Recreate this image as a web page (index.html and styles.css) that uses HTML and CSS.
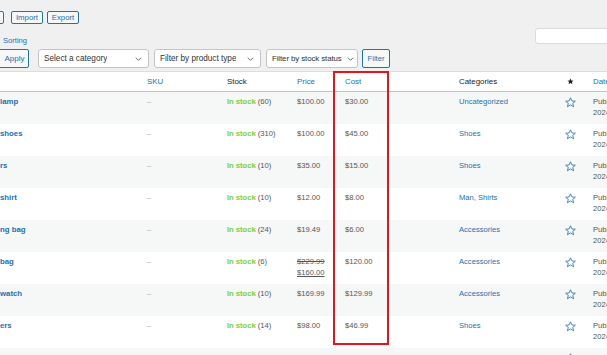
FILE: index.html
```html
<!DOCTYPE html>
<html>
<head>
<meta charset="utf-8">
<link rel="stylesheet" href="styles.css">
</head>
<body>
<div class="page">
  <div class="top-actions">
    <a class="btn btn-cut">Add new</a>
    <a class="btn">Import</a>
    <a class="btn">Export</a>
  </div>
  <div class="subbar">
    <a class="sub-link">Sorting</a>
    <div class="search"></div>
  </div>
  <div class="filters">
    <a class="btn btn-apply">Apply</a>
    <div class="select w-cat"><span>Select a category</span><svg class="chev" viewBox="0 0 10 6"><path d="M1 1l4 4 4-4" fill="none" stroke="#50575e" stroke-width="1.3"/></svg></div>
    <div class="select w-type"><span>Filter by product type</span><svg class="chev" viewBox="0 0 10 6"><path d="M1 1l4 4 4-4" fill="none" stroke="#50575e" stroke-width="1.3"/></svg></div>
    <div class="select w-stock"><span>Filter by stock status</span><svg class="chev" viewBox="0 0 10 6"><path d="M1 1l4 4 4-4" fill="none" stroke="#50575e" stroke-width="1.3"/></svg></div>
    <a class="btn btn-filter">Filter</a>
  </div>

  <div class="table">
    <div class="row head">
      <div></div>
      <div class="sort">SKU</div>
      <div>Stock</div>
      <div class="sort">Price</div>
      <div class="sort">Cost</div>
      <div>Categories</div>
      <div class="star-h"><svg viewBox="0 0 20 20"><polygon points="10,1.5 12.6,7.2 18.8,7.6 14,11.6 15.6,17.7 10,14.4 4.4,17.7 6,11.6 1.2,7.6 7.4,7.2" fill="#1d2327"/></svg></div>
      <div class="sort">Date</div>
    </div>

    <div class="row alt">
      <div class="name">lamp</div><div class="dash">–</div>
      <div><b class="instock">In stock</b> (60)</div>
      <div>$100.00</div><div>$30.00</div>
      <div class="cat">Uncategorized</div>
      <div class="star"><svg viewBox="0 0 20 20"><polygon points="10,1.5 12.6,7.2 18.8,7.6 14,11.6 15.6,17.7 10,14.4 4.4,17.7 6,11.6 1.2,7.6 7.4,7.2" fill="none" stroke="#2271b1" stroke-width="1.5" stroke-linejoin="round"/></svg></div>
      <div class="date">Published<br>2024/01/15 at 10:00 am</div>
    </div>

    <div class="row">
      <div class="name">shoes</div><div class="dash">–</div>
      <div><b class="instock">In stock</b> (310)</div>
      <div>$100.00</div><div>$45.00</div>
      <div class="cat">Shoes</div>
      <div class="star"><svg viewBox="0 0 20 20"><polygon points="10,1.5 12.6,7.2 18.8,7.6 14,11.6 15.6,17.7 10,14.4 4.4,17.7 6,11.6 1.2,7.6 7.4,7.2" fill="none" stroke="#2271b1" stroke-width="1.5" stroke-linejoin="round"/></svg></div>
      <div class="date">Published<br>2024/01/15 at 10:00 am</div>
    </div>

    <div class="row alt">
      <div class="name">rs</div><div class="dash">–</div>
      <div><b class="instock">In stock</b> (10)</div>
      <div>$35.00</div><div>$15.00</div>
      <div class="cat">Shoes</div>
      <div class="star"><svg viewBox="0 0 20 20"><polygon points="10,1.5 12.6,7.2 18.8,7.6 14,11.6 15.6,17.7 10,14.4 4.4,17.7 6,11.6 1.2,7.6 7.4,7.2" fill="none" stroke="#2271b1" stroke-width="1.5" stroke-linejoin="round"/></svg></div>
      <div class="date">Published<br>2024/01/15 at 10:00 am</div>
    </div>

    <div class="row">
      <div class="name">shirt</div><div class="dash">–</div>
      <div><b class="instock">In stock</b> (10)</div>
      <div>$12.00</div><div>$8.00</div>
      <div class="cat">Man, Shirts</div>
      <div class="star"><svg viewBox="0 0 20 20"><polygon points="10,1.5 12.6,7.2 18.8,7.6 14,11.6 15.6,17.7 10,14.4 4.4,17.7 6,11.6 1.2,7.6 7.4,7.2" fill="none" stroke="#2271b1" stroke-width="1.5" stroke-linejoin="round"/></svg></div>
      <div class="date">Published<br>2024/01/15 at 10:00 am</div>
    </div>

    <div class="row alt">
      <div class="name">ng bag</div><div class="dash">–</div>
      <div><b class="instock">In stock</b> (24)</div>
      <div>$19.49</div><div>$6.00</div>
      <div class="cat">Accessories</div>
      <div class="star"><svg viewBox="0 0 20 20"><polygon points="10,1.5 12.6,7.2 18.8,7.6 14,11.6 15.6,17.7 10,14.4 4.4,17.7 6,11.6 1.2,7.6 7.4,7.2" fill="none" stroke="#2271b1" stroke-width="1.5" stroke-linejoin="round"/></svg></div>
      <div class="date">Published<br>2024/01/15 at 10:00 am</div>
    </div>

    <div class="row">
      <div class="name">bag</div><div class="dash">–</div>
      <div><b class="instock">In stock</b> (6)</div>
      <div><del>$229.99</del><br><ins>$160.00</ins></div><div>$120.00</div>
      <div class="cat">Accessories</div>
      <div class="star"><svg viewBox="0 0 20 20"><polygon points="10,1.5 12.6,7.2 18.8,7.6 14,11.6 15.6,17.7 10,14.4 4.4,17.7 6,11.6 1.2,7.6 7.4,7.2" fill="none" stroke="#2271b1" stroke-width="1.5" stroke-linejoin="round"/></svg></div>
      <div class="date">Published<br>2024/01/15 at 10:00 am</div>
    </div>

    <div class="row alt">
      <div class="name">watch</div><div class="dash">–</div>
      <div><b class="instock">In stock</b> (10)</div>
      <div>$169.99</div><div>$129.99</div>
      <div class="cat">Accessories</div>
      <div class="star"><svg viewBox="0 0 20 20"><polygon points="10,1.5 12.6,7.2 18.8,7.6 14,11.6 15.6,17.7 10,14.4 4.4,17.7 6,11.6 1.2,7.6 7.4,7.2" fill="none" stroke="#2271b1" stroke-width="1.5" stroke-linejoin="round"/></svg></div>
      <div class="date">Published<br>2024/01/15 at 10:00 am</div>
    </div>

    <div class="row">
      <div class="name">ers</div><div class="dash">–</div>
      <div><b class="instock">In stock</b> (14)</div>
      <div>$98.00</div><div>$46.99</div>
      <div class="cat">Shoes</div>
      <div class="star"><svg viewBox="0 0 20 20"><polygon points="10,1.5 12.6,7.2 18.8,7.6 14,11.6 15.6,17.7 10,14.4 4.4,17.7 6,11.6 1.2,7.6 7.4,7.2" fill="none" stroke="#2271b1" stroke-width="1.5" stroke-linejoin="round"/></svg></div>
      <div class="date">Published<br>2024/01/15 at 10:00 am</div>
    </div>

    <div class="row alt">
      <div></div><div></div><div></div><div></div><div></div><div></div>
      <div class="star"><svg viewBox="0 0 20 20"><polygon points="10,1.5 12.6,7.2 18.8,7.6 14,11.6 15.6,17.7 10,14.4 4.4,17.7 6,11.6 1.2,7.6 7.4,7.2" fill="none" stroke="#2271b1" stroke-width="1.5" stroke-linejoin="round"/></svg></div>
      <div></div>
    </div>
  </div>

  <div class="highlight"></div>
</div>
</body>
</html>
```

FILE: styles.css
```css
html, body {
  margin: 0;
  padding: 0;
  overflow: hidden;
  background: #f0f0f1;
}
body {
  width: 607px;
  height: 355px;
  font-family: "Liberation Sans", Arial, sans-serif;
  color: #50575e;
}
.page {
  position: relative;
  width: 607px;
  height: 355px;
}
.top-actions {
  display: flex;
  gap: 4px;
  padding-top: 11px;
  height: 13px;
}
.btn {
  display: flex;
  align-items: center;
  justify-content: center;
  box-sizing: border-box;
  border: 1px solid #2271b1;
  border-radius: 2px;
  background: #f6f7f7;
  color: #2271b1;
  font-size: 7.8px;
  white-space: nowrap;
  overflow: hidden;
}
.top-actions .btn {
  height: 13px;
  width: 32px;
}
.top-actions .btn-cut {
  margin-left: -28px;
  color: transparent;
}
.top-actions .btn + .btn:nth-child(2) {
  margin-left: 3px;
}
.subbar {
  display: flex;
  justify-content: space-between;
  align-items: flex-start;
  margin-top: 4px;
  height: 17px;
}
.sub-link {
  color: #2271b1;
  font-size: 7.6px;
  line-height: 11px;
  margin-left: 3px;
  margin-top: 7px;
}
.search {
  width: 80px;
  height: 16px;
  box-sizing: border-box;
  border: 1px solid #dcdcde;
  border-radius: 3px;
  background: #fff;
  margin-right: -8px;
}
.filters {
  display: flex;
  gap: 5px;
  margin-top: 4px;
  height: 19px;
}
.filters .btn {
  height: 19px;
}
.btn-apply {
  width: 39px;
  margin-left: -10px;
  margin-right: 4px;
  padding-left: 10px;
  font-size: 8px;
}
.btn-filter {
  width: 28px;
  margin-left: -1px;
  font-size: 7.6px;
}
.select {
  display: flex;
  align-items: center;
  justify-content: space-between;
  box-sizing: border-box;
  height: 19px;
  background: #fff;
  border: 1px solid #c3c4c7;
  border-radius: 3px;
  padding: 0 6px 0 5px;
  font-size: 8.2px;
  color: #2c3338;
  white-space: nowrap;
}
.select span {
  overflow: hidden;
}
.w-cat { width: 111px; }
.w-type { width: 107px; }
.w-stock {
  width: 92px;
  padding-right: 3px;
  font-size: 7.9px;
  letter-spacing: -0.1px;
}
.chev {
  width: 7px;
  height: 4px;
  flex: none;
}
.table {
  margin-top: 3px;
  border-top: 1px solid #dcdcde;
  background: #fff;
}
.row {
  display: grid;
  grid-template-columns: 147px 80px 70px 48px 114px 104px 30px 1fr;
  height: 32px;
  box-sizing: border-box;
  padding-top: 4px;
  font-size: 7.6px;
  line-height: 11px;
  background: #fff;
  white-space: nowrap;
}
.row.alt {
  background: #f6f7f7;
}
.row.head {
  height: 20px;
  padding-top: 4px;
  border-bottom: 1px solid #c3c4c7;
  color: #1d2327;
  font-size: 7.9px;
  font-weight: normal;
}
.sort {
  color: #2271b1;
}
.name {
  color: #2271b1;
  font-weight: bold;
  font-size: 7.8px;
}
.dash {
  color: #a7aaad;
}
.instock {
  color: #7ad03a;
  font-weight: bold;
}
.cat {
  color: #2271b1;
}
del, ins {
  text-decoration-thickness: 1px;
}
ins {
  text-decoration: underline;
}
.star {
  padding-left: 2px;
}
.star svg {
  width: 11px;
  height: 11px;
  display: block;
  margin-top: 1px;
}
.star-h {
  padding-left: 4px;
}
.star-h svg {
  width: 7px;
  height: 7px;
  display: block;
  margin-top: 2px;
}
.date {
  color: #50575e;
}
.highlight {
  position: absolute;
  left: 333px;
  top: 71px;
  width: 56px;
  height: 274px;
  box-sizing: border-box;
  border: 2px solid #e8141b;
}
```
